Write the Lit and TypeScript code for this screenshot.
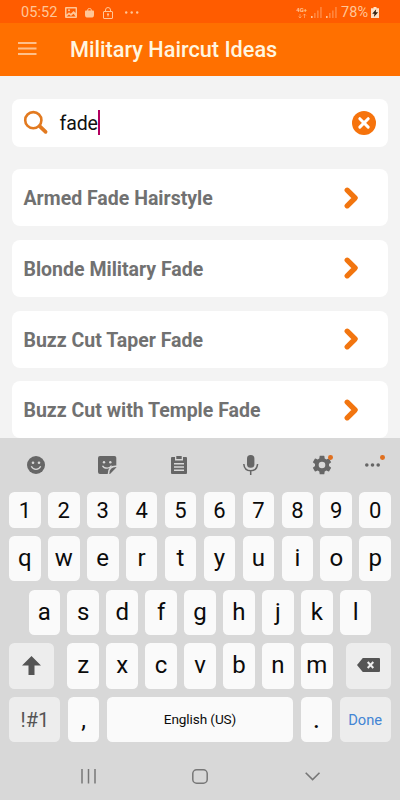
import { LitElement, html, css, svg, nothing } from "lit";
import { customElement, property } from "lit/decorators.js";

const glyphs: Record<string, unknown> = {
  picture: svg`<path fill-rule="evenodd" d="M1 0h10a1 1 0 0 1 1 1v9a1 1 0 0 1-1 1H1a1 1 0 0 1-1-1V1a1 1 0 0 1 1-1zM1.5 1.5v6l2.5-2.2 1.8 1.4L8.6 4l2 2V1.5zM1.6 9.4h9L8.5 6.8 6 9 4 7.5z"/><circle cx="4" cy="3.3" r="1"/>`,
  bag: svg`<path d="M.8 2.500h7.400c.5 0 .8.4.8.9v3.600C9 9 7.800 9.500 6.500 9.500h-4C1.200 9.500 0 9 0 7V3.400c0-.5.3-.9.8-.9z"/><path d="M2.700 3V1.800q0-1.300 1.800-1.300t1.800 1.300V3" fill="none" stroke="currentColor"/>`,
  lock: svg`<g fill="none" stroke="currentColor"><rect x=".5" y="4.500" width="9" height="7" rx=".5"/><path d="M2.500 4.500V3Q2.500.500 5 .500T7.500 3v1.500M5 7v2.500"/></g><circle cx="5" cy="7.300" r="1"/>`,
  dots: svg`<circle cx="1.200" cy="1.500" r="1.200"/><circle cx="6.700" cy="1.500" r="1.200"/><circle cx="12.200" cy="1.500" r="1.200"/>`,
  arrows: svg`<path d="M2 0v4M.500 2.500 2 4l1.500-1.500M6.500 4V0M5 1.500 6.500 0 8 1.500" fill="none" stroke="currentColor" stroke-width=".8" opacity=".7"/>`,
  signal: svg`<path d="M0 9h1.600v2H0z"/><path opacity=".5" d="M3.200 6h1.300v5H3.200zM6.200 3.500h1.300V11H6.200zM9.300 0h1.300v11H9.300z"/>`,
  battery: svg`<path d="M2.500 0h3v1.200H8V11H0V1.200h2.500z" fill="#ffe0c4"/><path d="M5.200 2.200 1.200 6.800h2.300L2.900 10l4.200-4.800H4.700z" fill="#33200f"/>`,
  menu: svg`<path d="M0 1h18.500M0 6.500h18.500M0 12h18.500" stroke="currentColor" stroke-width="1.900"/>`,
  search: svg`<g fill="none" stroke="currentColor"><circle cx="9.300" cy="9.200" r="8.100" stroke-width="2.600"/><path d="m15.600 15.200 6 5.700" stroke-width="3.700" stroke-linecap="round"/></g>`,
  clear: svg`<circle cx="12" cy="12" r="12"/><path d="m7.800 7.700 8.400 8.400M16.200 7.700l-8.400 8.400" stroke="#fff" stroke-width="3" stroke-linecap="round"/>`,
  chevron: svg`<path d="m3.200 3.200 7.900 7.800-7.900 7.800" fill="none" stroke="currentColor" stroke-width="5.300" stroke-linecap="round" stroke-linejoin="round"/>`,
  smile: svg`<circle cx="9" cy="9" r="9"/><g fill="#d8d8d8"><circle cx="6" cy="6.800" r="1.300"/><circle cx="12" cy="6.800" r="1.300"/></g><path d="M4.300 10.300q1.500 3 4.700 3t4.700-3" fill="none" stroke="#d8d8d8" stroke-width="1.300"/>`,
  sticker: svg`<path d="M2 0h14.500q1.800 0 1.800 1.800V9.500q-8.500-.5-8.600 8.500H2q-2 0-2-2V2q0-2 2-2z"/><path d="M18.300 11v.6L12 18h-.7q-.1-7 7-7z"/><g fill="#d8d8d8"><circle cx="6" cy="6.300" r="1.200"/><circle cx="12.300" cy="6.300" r="1.200"/></g><path d="M4.500 9.700q1.200 2.500 4.700 2.500 2.700 0 4.300-2.500" fill="none" stroke="#d8d8d8" stroke-width="1.300"/>`,
  clipboard: svg`<path fill-rule="evenodd" d="M1 1h3v3.500h8V1h3q1 0 1 1v15q0 1-1 1H1q-1 0-1-1V2q0-1 1-1zm2 6v1.400h10V7zm0 3.300v1.400h10v-1.400zm0 3.300V15h10v-1.400z"/><path d="M5.300 0h5.400v3H5.300z"/>`,
  mic: svg`<rect x="4" y="0" width="7.400" height="12.800" rx="3.600"/><path d="M.800 9q.500 6.700 6.900 6.700T14.600 9M7.700 15.700V20" fill="none" stroke="currentColor" stroke-width="1.500"/>`,
  gear: svg`<path transform="translate(-2.700 -2.700) scale(.975)" d="M19.140 12.940c.04-.3.060-.610.060-.940 0-.320-.020-.640-.070-.940l2.030-1.580a.490.490 0 0 0 .120-.610l-1.920-3.320a.488.488 0 0 0-.590-.220l-2.390.960c-.5-.380-1.030-.700-1.620-.940l-.360-2.540a.484.484 0 0 0-.480-.410h-3.840c-.240 0-.430.170-.470.410l-.360 2.540c-.590.240-1.130.570-1.620.940l-2.390-.960a.480.480 0 0 0-.590.220L2.740 8.870c-.120.210-.080.470.120.610l2.030 1.580c-.050.300-.090.630-.090.940s.020.640.070.940l-2.030 1.580a.490.490 0 0 0-.120.610l1.920 3.320c.120.220.370.290.590.220l2.390-.960c.500.380 1.030.700 1.620.940l.360 2.540c.050.240.240.410.480.410h3.840c.240 0 .440-.170.470-.410l.360-2.540c.590-.240 1.130-.560 1.620-.940l2.390.960c.220.080.470 0 .590-.220l1.920-3.320a.485.485 0 0 0-.120-.610zM12 15.400a3.400 3.400 0 1 1 0-6.800 3.400 3.400 0 0 1 0 6.800z"/>`,
  more: svg`<circle cx="1.800" cy="2" r="1.800"/><circle cx="7.500" cy="2" r="1.800"/><circle cx="13.200" cy="2" r="1.800"/>`,
  shift: svg`<path d="M9.500 0 19 9.500h-6.500V19h-6V9.500H0z"/>`,
  erase: svg`<path d="M5.800 0H22q1 0 1 1v12q0 1-1 1H5.800L0 7z"/><path d="m10.700 4 5.600 6M16.300 4l-5.600 6" stroke="#ededed" stroke-width="2"/>`,
  recents: svg`<path d="M1 0v14.500M7.500 0v14.500M14 0v14.500" stroke="currentColor" stroke-width="1.500"/>`,
  home: svg`<rect x=".8" y=".8" width="14.400" height="13.400" rx="3.800" fill="none" stroke="currentColor" stroke-width="1.500"/>`,
  down: svg`<path d="m.7.700 6.900 6.900L14.500.700" fill="none" stroke="currentColor" stroke-width="1.600"/>`,
};

@customElement("ui-icon")
class UiIcon extends LitElement {
  @property() name = "";
  @property({ type: Number }) w = 16;
  @property({ type: Number }) h = 16;
  static styles = css`
    :host { display: block; flex: none; }
    svg { display: block; fill: currentColor; overflow: visible; }
  `;
  render() {
    return html`<svg width=${this.w} height=${this.h} viewBox="0 0 ${this.w} ${this.h}">${glyphs[this.name]}</svg>`;
  }
}

const icon = (name: string, w: number, h: number, cls = "") =>
  html`<ui-icon class=${cls || nothing} name=${name} w=${w} h=${h}></ui-icon>`;

@customElement("soft-keyboard")
class SoftKeyboard extends LitElement {
  static styles = css`
    :host { display: flex; flex-direction: column; height: 362px; background: #d8d8d8; color: #0b0b0b; }
    .tools { height: 54px; display: grid; grid-template-columns: 71.6px 71.6px 71.6px 71.6px 71.6px 1fr; color: #666; box-sizing: border-box; }
    .tool { display: flex; align-items: center; justify-content: center; position: relative; }
    .last { justify-content: flex-start; padding-left: 7.500px; }
    .dot::after { content: ""; position: absolute; width: 4.800px; height: 4.800px; border-radius: 50%; background: #e07020; left: 42px; top: 17px; }
    .last.dot::after { left: 22.500px; }
    .row { display: flex; justify-content: center; gap: 7.330px; margin: 0 9.300px 8.500px; height: 45.200px; }
    .num { height: 36px; margin-bottom: 8px; font-size: 22px; }
    .alpha { font-size: 24px; }
    .key { width: 31.600px; flex: none; background: #fafafa; border-radius: 5.500px; display: flex; align-items: center; justify-content: center; box-sizing: border-box; }
    .alpha .key { padding-bottom: 1px; }
    .fn { background: #ededed; color: #555; }
    .shift { width: 45.300px; margin-right: 5.800px; }
    .erase { width: 45.300px; margin-left: 5.800px; }
    .wide { width: 51.200px; font-size: 20px; }
    .space { flex: 1; font-size: 13.600px; letter-spacing: -.1px; padding-bottom: 1px; }
    .done { color: #4385d4; font-size: 14.700px; }
    .punct { font-size: 24px; }
    .stop { font-size: 28px; padding-bottom: 2px; }
    .nav { flex: 1; display: grid; grid-template-columns: 1fr 1fr 1fr; align-items: center; justify-items: center; padding: 0 32px; color: #777; margin-top: 1.500px; }
  `;
  key(k: string) {
    return html`<div class="key">${k}</div>`;
  }
  render() {
    return html`
      <div class="tools">
        <div class="tool">${icon("smile", 18, 18)}</div>
        <div class="tool">${icon("sticker", 18, 18)}</div>
        <div class="tool">${icon("clipboard", 16, 18)}</div>
        <div class="tool">${icon("mic", 15, 20)}</div>
        <div class="tool dot">${icon("gear", 18, 18)}</div>
        <div class="tool last dot">${icon("more", 15, 4)}</div>
      </div>
      <div class="row num">${[..."1234567890"].map(this.key)}</div>
      <div class="row alpha">${[..."qwertyuiop"].map(this.key)}</div>
      <div class="row alpha">${[..."asdfghjkl"].map(this.key)}</div>
      <div class="row alpha">
        <div class="key fn shift">${icon("shift", 19, 19)}</div>
        ${[..."zxcvbnm"].map(this.key)}
        <div class="key fn erase">${icon("erase", 23, 14)}</div>
      </div>
      <div class="row">
        <div class="key fn wide">!#1</div>
        <div class="key punct">,</div>
        <div class="key space">English (US)</div>
        <div class="key stop">.</div>
        <div class="key fn wide done">Done</div>
      </div>
      <div class="nav">
        ${icon("recents", 15, 15)}${icon("home", 16, 15)}${icon("down", 15, 8)}
      </div>
    `;
  }
}

@customElement("app-root")
class AppRoot extends LitElement {
  static styles = css`
    :host { display: flex; flex-direction: column; width: 400px; height: 800px; overflow: hidden; background: #f3f3f3; font-family: Roboto, sans-serif; }
    .status { flex: none; height: 23px; background: #ff5c00; color: #ffc697; display: flex; align-items: center; padding: 2px 21px 0; box-sizing: border-box; font-size: 14.500px; }
    .time { width: 44px; letter-spacing: .1px; }
    .bag { margin-left: 8px; }
    .lock { margin-left: 9px; }
    .dots { margin-left: 11.500px; }
    .net { margin-left: auto; display: flex; flex-direction: column; align-items: center; gap: 1px; font-size: 6px; line-height: 6px; font-weight: 700; }
    .sig { margin-left: 4px; }
    .pct { margin: 0 3px 0 4px; }
    .bar { flex: none; height: 52.500px; background: #ff7000; color: #fff6e0; display: flex; align-items: center; padding-left: 18px; box-sizing: border-box; }
    .menu { color: #ffc08a; margin-bottom: 2px; }
    .title { margin: 1px 0 0 33px; font-size: 21.700px; font-weight: 500; white-space: nowrap; }
    .main { flex: 1; min-height: 0; overflow: hidden; padding: 23px 12px 0; }
    .box { background: #fff; border-radius: 8px; display: flex; align-items: center; box-sizing: border-box; }
    .search { height: 48px; padding: 0 12px; margin-bottom: 22.500px; font-size: 19.500px; color: #111; }
    .glass { color: #e27a20; }
    .query { margin-left: 11.500px; padding-top: 1px; letter-spacing: -.1px; }
    .caret { width: 2px; height: 25px; background: #b2005f; }
    .clear { margin-left: auto; color: #f6730c; }
    .item { height: 57px; margin-bottom: 13.800px; padding: 2px 29px 0 11.500px; justify-content: space-between; color: #717171; font-size: 19.500px; font-weight: 700; }
    .chev { color: #f2750f; margin-bottom: 2px; }
  `;
  render() {
    const items = ["Armed Fade Hairstyle", "Blonde Military Fade", "Buzz Cut Taper Fade", "Buzz Cut with Temple Fade"];
    return html`
      <div class="status">
        <span class="time">05:52</span>
        ${icon("picture", 12, 11)}${icon("bag", 9, 10, "bag")}${icon("lock", 10, 12, "lock")}${icon("dots", 15, 3, "dots")}
        <span class="net"><span>4G+</span>${icon("arrows", 8, 4)}</span>
        ${icon("signal", 11, 11, "sig")}${icon("signal", 11, 11, "sig")}
        <span class="pct">78%</span>${icon("battery", 8, 11)}
      </div>
      <div class="bar">${icon("menu", 19, 13, "menu")}<span class="title">Military Haircut Ideas</span></div>
      <div class="main">
        <div class="box search">
          ${icon("search", 24, 24, "glass")}
          <span class="query">fade</span><span class="caret"></span>
          ${icon("clear", 24, 24, "clear")}
        </div>
        ${items.map((t) => html`<div class="box item"><span>${t}</span>${icon("chevron", 15, 22, "chev")}</div>`)}
      </div>
      <soft-keyboard></soft-keyboard>
    `;
  }
}
